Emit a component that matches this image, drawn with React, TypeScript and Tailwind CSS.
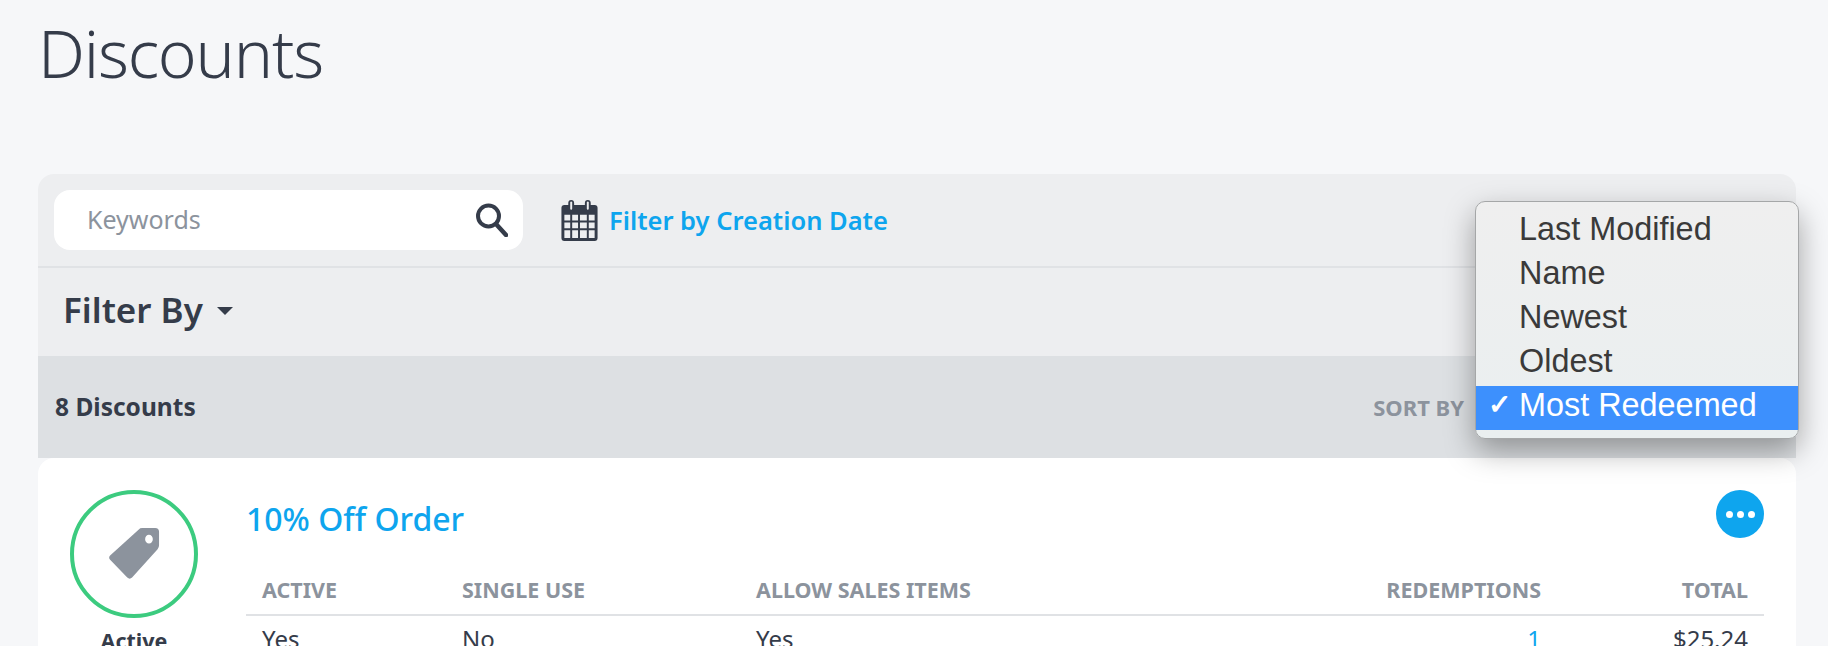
import React from 'react';

const font = { sans: 'font-["Noto_Sans","Open_Sans",sans-serif]' };

const sortOptions = ['Last Modified', 'Name', 'Newest', 'Oldest', 'Most Redeemed'];

const columns = [
  { label: 'ACTIVE', value: 'Yes', width: 'w-[200px]' },
  { label: 'SINGLE USE', value: 'No', width: 'w-[294px]' },
  { label: 'ALLOW SALES ITEMS', value: 'Yes', width: 'w-auto' },
];

const TagIcon = () => (
  <svg width="52" height="52" viewBox="0 0 52 54" className="text-[#8c939d]">
    <path
      fill="currentColor"
      fillRule="evenodd"
      d="M31 1.5 Q32.2 0 34.5 0 H48 Q52 0 52 4 V18 Q52 20.5 50.5 22 L24 51.5 Q21.5 53.8 19 51.5 L1.2 33 Q-0.8 30.8 1.2 28.5 Z M41.5 7 A4 4.6 0 1 0 41.6 16.2 A4 4.6 0 1 0 41.5 7 Z"
    />
  </svg>
);

const SearchIcon = () => (
  <svg width="32" height="34" viewBox="0 0 32 34" className="text-[#353c4a]">
    <circle cx="12.5" cy="13" r="10.5" fill="none" stroke="currentColor" strokeWidth="4" />
    <path d="M20 21 L30 32" stroke="currentColor" strokeWidth="4.5" strokeLinecap="round" />
  </svg>
);

const CalendarIcon = () => (
  <svg width="37" height="41" viewBox="0 0 37 42" className="text-[#353c4a] shrink-0">
    <path
      fill="currentColor"
      fillRule="evenodd"
      d="M3 5 H7 V3 Q7 0 10 0 Q13 0 13 3 V5 H24 V3 Q24 0 27 0 Q30 0 30 3 V5 H34 Q37 5 37 8 V39 Q37 42 34 42 H3 Q0 42 0 39 V8 Q0 5 3 5 Z M9 2 V9 Q9 10 10 10 Q11 10 11 9 V2 Q11 1.5 10 1.5 Q9 1.5 9 2 Z M26 2 V9 Q26 10 27 10 Q28 10 28 9 V2 Q28 1.5 27 1.5 Q26 1.5 26 2 Z M3 15 V21 H9 V15 Z M11 15 V21 H17 V15 Z M19 15 V21 H26 V15 Z M28 15 V21 H34 V15 Z M3 23 V29 H9 V23 Z M11 23 V29 H17 V23 Z M19 23 V29 H26 V23 Z M28 23 V29 H34 V23 Z M3 31 V39 H9 V31 Z M11 31 V39 H17 V31 Z M19 31 V39 H26 V31 Z M28 31 V39 H34 V31 Z"
    />
  </svg>
);

export default function App() {
  return (
    <div className={`${font.sans} h-[646px] overflow-hidden bg-[#f6f7f9] text-[#353c4a]`}>
      <div className="pl-[38px] pr-[32px] pt-[12px]">
        <h1 className="h-[162px] text-[66px] leading-[80px] font-light tracking-[-1.2px]">Discounts</h1>

        <div className="relative rounded-t-[16px] bg-[#edeef0]">
          {/* search row */}
          <div className="flex h-[94px] items-center gap-[36px] border-b-2 border-[#e0e2e5] pl-[16px]">
            <div className="flex h-[60px] w-[469px] items-center justify-between rounded-[16px] bg-white pl-[33px] pr-[15px]">
              <span className="text-[25px] text-[#8c939d]">Keywords</span>
              <SearchIcon />
            </div>
            <div className="flex items-center gap-[11px] pl-[2px]">
              <CalendarIcon />
              <span className="text-[25.5px] font-semibold text-[#0ea5ee]">Filter by Creation Date</span>
            </div>
          </div>

          {/* filter row */}
          <div className="flex h-[88px] items-center gap-[14px] pb-[4px] pl-[25px]">
            <span className="text-[35px] font-semibold">Filter By</span>
            <span className="mt-[2px] border-x-[8px] border-t-[8px] border-x-transparent border-t-[#353c4a]" />
          </div>

          {/* results bar */}
          <div className="flex h-[102px] items-center justify-between bg-[#dde0e3] pl-[17px]">
            <span className="text-[24.5px] font-bold">8 Discounts</span>
            <span className="mr-[332px] text-[22px] font-bold text-[#8c939d]">SORT BY</span>
          </div>

          {/* native select menu */}
          <div className='absolute right-[-3px] top-[27px] w-[324px] rounded-[10px] border border-[#a5a7a8] bg-gradient-to-b from-[#efefef] to-[#eaeff0] py-[8px] font-["Liberation_Sans",sans-serif] text-[32.4px] leading-[44px] text-[#3a3a3a] shadow-[0_12px_30px_rgba(0,0,0,0.35)]'>
            {sortOptions.map((option) => {
              const selected = option === 'Most Redeemed';
              return (
                <div
                  key={option}
                  className={`flex h-[44px] items-center pb-[6px] ${selected ? 'bg-[#3d90fd] text-white' : ''}`}
                >
                  <span className="w-[43px] pl-[12px] text-[28px] leading-none font-bold">{selected ? '✓' : ''}</span>
                  {option}
                </div>
              );
            })}
          </div>
        </div>

        {/* discount card */}
        <div className="flex h-[300px] rounded-t-[16px] bg-white pl-[32px] pr-[32px] pt-[32px]">
          <div className="flex w-[176px] shrink-0 flex-col items-start">
            <div className="flex h-[128px] w-[128px] items-center justify-center rounded-full border-[4px] border-[#3ccb7f]">
              <TagIcon />
            </div>
            <span className="mt-[3px] w-[128px] text-center text-[21.5px] leading-[40px] font-bold">Active</span>
          </div>
          <div className="flex-1">
            <div className="flex h-[48px] items-start justify-between">
              <a className="text-[32px] leading-[58px] font-medium text-[#0ea5ee]">10% Off Order</a>
              <button className="flex h-[48px] w-[48px] items-center justify-center gap-[4px] rounded-full bg-[#0ea5ee]">
                <span className="h-[7px] w-[7px] rounded-full bg-white" />
                <span className="h-[7px] w-[7px] rounded-full bg-white" />
                <span className="h-[7px] w-[7px] rounded-full bg-white" />
              </button>
            </div>
            <table className="mt-[29px] w-full border-collapse text-left">
              <thead>
                <tr className="border-b-2 border-[#e0e2e5] text-[21.5px] text-[#8c939d]">
                  {columns.map((col) => (
                    <th key={col.label} className={`${col.width} h-[48px] pl-[16px] font-bold`}>
                      {col.label}
                    </th>
                  ))}
                  <th className="h-[48px] w-[200px] text-right font-bold">REDEMPTIONS</th>
                  <th className="h-[48px] w-[223px] pr-[16px] text-right font-bold">TOTAL</th>
                </tr>
              </thead>
              <tbody>
                <tr className="text-[24px] leading-[46px]">
                  {columns.map((col) => (
                    <td key={col.label} className="pl-[16px]">
                      {col.value}
                    </td>
                  ))}
                  <td className="text-right text-[#0ea5ee]">1</td>
                  <td className="pr-[16px] text-right">$25.24</td>
                </tr>
              </tbody>
            </table>
          </div>
        </div>
      </div>
    </div>
  );
}
